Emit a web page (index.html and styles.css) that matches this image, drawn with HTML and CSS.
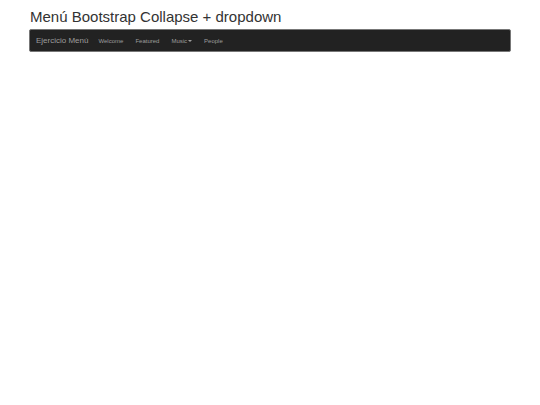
FILE: index.html
```html
<!DOCTYPE html>
<html lang="es">
<head>
  <meta charset="UTF-8">
  <title>Menú Bootstrap</title>
  <link rel="stylesheet" href="styles.css">
</head>
<body>

  <div class="container">
    <h1>Menú Bootstrap Collapse + dropdown</h1>

    <nav class="navbar">
      <a class="navbar-brand" href="#">Ejercicio Menú</a>
      <ul class="nav">
        <li><a href="#">Welcome</a></li>
        <li><a href="#">Featured</a></li>
        <li><a href="#">Music<span class="caret"></span></a></li>
        <li><a href="#">People</a></li>
      </ul>
    </nav>
  </div>

</body>
</html>
```

FILE: styles.css
```css
body {
  margin: 0;
  font-family: "Liberation Sans", Arial, sans-serif;
  font-size: 6px;
  line-height: 12px;
  color: #333;
  background-color: #fff;
}

.container {
  margin: 0 29px;
}

h1 {
  margin: 0;
  padding: 9px 1px 4px;
  font-size: 15px;
  line-height: 16px;
  font-weight: 500;
}

.navbar {
  display: flex;
  align-items: center;
  min-height: 21px;
  border: 1px solid #777;
  border-radius: 2px;
  background-color: #222;
}

.navbar a {
  color: #9d9d9d;
  text-decoration: none;
}

.navbar a:hover {
  color: #fff;
}

.navbar-brand {
  padding: 0 4px 0 6px;
  font-size: 8px;
}

.nav {
  display: flex;
  margin: 0;
  padding: 0;
  list-style: none;
}

.nav a {
  display: block;
  padding: 0 6px;
}

.caret {
  display: inline-block;
  margin-left: 1px;
  vertical-align: middle;
  border-top: 2px solid;
  border-right: 2px solid transparent;
  border-left: 2px solid transparent;
}
```
